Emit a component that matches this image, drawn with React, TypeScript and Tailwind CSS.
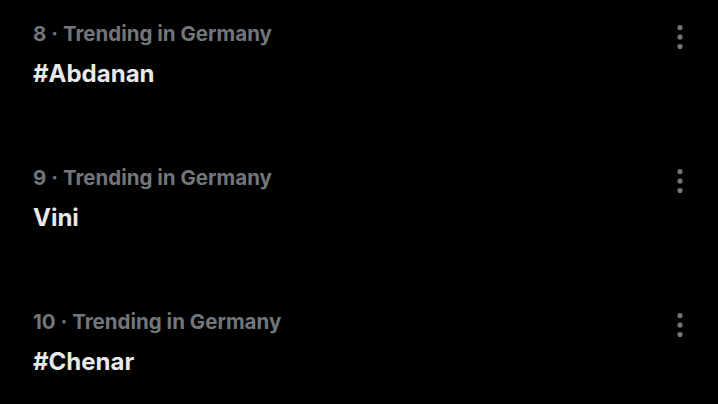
const trends = [
  { rank: 8, place: "Germany", name: "#Abdanan" },
  { rank: 9, place: "Germany", name: "Vini" },
  { rank: 10, place: "Germany", name: "#Chenar" },
];

const MoreIcon = () => (
  <svg width="20" height="30" viewBox="0 0 20 30" fill="#71767b">
    <circle cx="10" cy="5.5" r="2.6" />
    <circle cx="10" cy="15" r="2.6" />
    <circle cx="10" cy="24.5" r="2.6" />
  </svg>
);

const App = (): any => {
  return (
    <div
      className="w-[718px] h-[404px] bg-black overflow-hidden"
      style={{ fontFamily: "Inter, 'Liberation Sans', sans-serif" }}
    >
      {trends.map((t) => (
        <div key={t.rank} className="h-[144px] pt-[20px] pl-[33px] pr-[28px] flex justify-between">
          <div className="flex flex-col">
            <span className="text-[20.5px] leading-[28px] font-bold text-[#71767b]">
              {t.rank} · Trending in {t.place}
            </span>
            <span className="mt-[10px] text-[24px] leading-[32px] font-bold text-[#e7e9ea]">
              {t.name}
            </span>
          </div>
          <div className="pt-[2px]">
            <MoreIcon />
          </div>
        </div>
      ))}
    </div>
  );
};

export default App;
